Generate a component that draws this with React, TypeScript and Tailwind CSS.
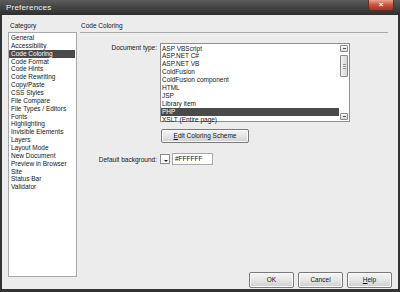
const categories = [
  'General',
  'Accessibility',
  'Code Coloring',
  'Code Format',
  'Code Hints',
  'Code Rewriting',
  'Copy/Paste',
  'CSS Styles',
  'File Compare',
  'File Types / Editors',
  'Fonts',
  'Highlighting',
  'Invisible Elements',
  'Layers',
  'Layout Mode',
  'New Document',
  'Preview in Browser',
  'Site',
  'Status Bar',
  'Validator',
]

const docTypes = [
  'ASP VBScript',
  'ASP.NET C#',
  'ASP.NET VB',
  'ColdFusion',
  'ColdFusion component',
  'HTML',
  'JSP',
  'Library item',
  'PHP',
  'XSLT (Entire page)',
]

function Btn({ children, className }: { children: React.ReactNode; className?: string }) {
  return (
    <div
      className={
        'flex items-center justify-center rounded-[2px] border border-[#7a7a7a] bg-gradient-to-b from-[#f6f6f6] via-[#e6e6e6] to-[#cfcfcf] text-[6.5px] text-[#111] shadow-[inset_0_0_0_1px_#fafafa] ' +
        (className ?? '')
      }
    >
      {children}
    </div>
  )
}

export default function App() {
  return (
    <div
      className="w-[400px] h-[292px] flex flex-col bg-[#333] overflow-hidden"
      style={{ fontFamily: '"Liberation Sans", Arial, sans-serif' }}
    >
      {/* title bar */}
      <div className="h-[15px] flex items-center bg-gradient-to-b from-[#5c5c5c] via-[#444] to-[#2e2e2e] relative">
        <span className="pl-[6px] text-[8px] leading-none text-[#f4f4f4] tracking-[0.2px]">Preferences</span>
        <div className="absolute right-[6px] top-0 w-[26px] h-[11px] rounded-b-[3px] border border-[#6b2a22] border-t-0 bg-gradient-to-b from-[#e8a493] via-[#c8523c] to-[#a63420] flex items-center justify-center">
          <span className="text-[8px] leading-none font-bold text-white">×</span>
        </div>
      </div>

      {/* body */}
      <div className="flex-1 mx-[2px] mb-[3px] bg-[#ececec] flex pt-[7px] text-[6.5px] text-[#151515]">
        {/* category column */}
        <div className="ml-[6px] w-[69px] flex flex-col">
          <div className="h-[8px] leading-[8px] pl-[2px]">Category</div>
          <div className="mt-[2px] h-[245px] border border-[#a9a9a9] bg-white pt-[1px]">
            {categories.map((c) => (
              <div
                key={c}
                className={
                  'h-[7.87px] leading-[7.87px] pl-[2px] mr-[1px] whitespace-nowrap ' +
                  (c === 'Code Coloring' ? 'bg-[#4a4a4a] text-white' : '')
                }
              >
                {c}
              </div>
            ))}
          </div>
        </div>

        {/* panel */}
        <div className="ml-[3px] mr-[6px] flex-1 flex flex-col">
          <div className="h-[8px] leading-[8px] pl-[1px]">Code Coloring</div>
          <div className="mt-[2px] mr-[4px] h-px bg-[#a9a9a9]" />

          <div className="mt-[10px] flex">
            <div className="w-[77px] text-right leading-[8px] pt-[1px]">Document type:</div>
            <div className="ml-[3px] w-[190px] h-[79px] border border-[#8f8f8f] bg-white flex">
              <div className="flex-1 pt-[0.5px]">
                {docTypes.map((d) => (
                  <div
                    key={d}
                    className={
                      'h-[7.9px] leading-[7.9px] pl-[1px] whitespace-nowrap ' +
                      (d === 'PHP' ? 'bg-[#4a4a4a] text-white' : '')
                    }
                  >
                    {d}
                  </div>
                ))}
              </div>
              <div className="w-[8px] ml-[1px] mr-[1px] flex flex-col py-[1px]">
                <div className="h-[7px] border border-[#8a8a8a] rounded-[1px] bg-gradient-to-b from-[#fafafa] to-[#d8d8d8] flex items-center justify-center">
                  <div className="w-[3px] h-px bg-[#555]" />
                </div>
                <div className="mt-[3px] h-[22px] border border-[#8a8a8a] rounded-[1px] bg-gradient-to-r from-[#f4f4f4] to-[#d6d6d6] flex flex-col items-center justify-center gap-[1px]">
                  <div className="w-[3px] h-px bg-[#9a9a9a]" />
                  <div className="w-[3px] h-px bg-[#9a9a9a]" />
                  <div className="w-[3px] h-px bg-[#9a9a9a]" />
                </div>
                <div className="flex-1" />
                <div className="h-[7px] border border-[#8a8a8a] rounded-[1px] bg-gradient-to-b from-[#fafafa] to-[#d8d8d8] flex items-center justify-center">
                  <div className="w-[3px] h-px bg-[#555]" />
                </div>
              </div>
            </div>
          </div>

          <Btn className="mt-[7px] ml-[81px] w-[88px] h-[14px]">
            <span>
              <span className="underline">E</span>dit Coloring Scheme
            </span>
          </Btn>

          <div className="mt-[10px] flex items-start">
            <div className="w-[77px] text-right leading-[8px] pt-[3px]">Default background:</div>
            <div className="ml-[3px] mt-[1px] w-[10px] h-[10px] border border-[#8a8a8a] bg-white relative">
              <div className="absolute right-[1px] bottom-[1px] w-0 h-0 border-l-[2px] border-r-[2px] border-t-[2px] border-l-transparent border-r-transparent border-t-[#222]" />
            </div>
            <div className="ml-[2px] w-[41px] h-[12px] border border-[#a9a9a9] bg-white leading-[10px] pl-[2px]">#FFFFFF</div>
          </div>

          <div className="flex-1" />

          <div className="mb-[1px] flex justify-end gap-[4px]">
            <Btn className="w-[45px] h-[16px]">OK</Btn>
            <Btn className="w-[45px] h-[16px]">Cancel</Btn>
            <Btn className="w-[45px] h-[16px]">
              <span>
                <span className="underline">H</span>elp
              </span>
            </Btn>
          </div>
        </div>
      </div>
    </div>
  )
}
